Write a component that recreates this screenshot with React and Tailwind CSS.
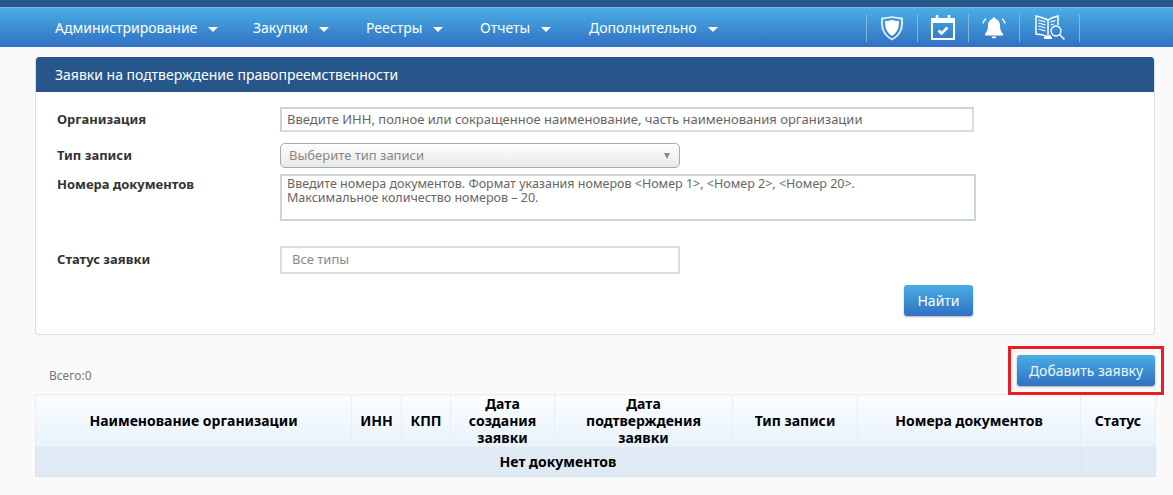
import { ChevronDown } from 'lucide-react';

const MENU = [
  { label: 'Администрирование', cls: 'w-[198px]' },
  { label: 'Закупки', cls: 'w-[113px]' },
  { label: 'Реестры', cls: 'w-[114px]' },
  { label: 'Отчеты', cls: 'w-[109px]' },
  { label: 'Дополнительно', cls: 'w-[140px]' },
];

const COLS = [
  { label: ['Наименование организации'], cls: 'w-[316px]' },
  { label: ['ИНН'], cls: 'w-[50px]' },
  { label: ['КПП'], cls: 'w-[49px]' },
  { label: ['Дата', 'создания', 'заявки'], cls: 'w-[104px]' },
  { label: ['Дата', 'подтверждения', 'заявки'], cls: 'w-[178px]' },
  { label: ['Тип записи'], cls: 'w-[125px]' },
  { label: ['Номера документов'], cls: 'w-[223px]' },
  { label: ['Статус'], cls: 'w-[75px]' },
];

function Caret() {
  return <span className="ml-[11px] mt-[3px] h-0 w-0 border-x-[5px] border-t-[5px] border-x-transparent border-t-white" />;
}

function ShieldIcon() {
  return (
    <svg width="24" height="26" viewBox="0 0 24 26">
      <path d="M12 2 C8 3 5 3 2 3.500 C1.500 11 2 19 12 24.500 C22 19 22.500 11 22 3.500 C19 3 16 3 12 2 Z" fill="none" stroke="white" strokeOpacity="0.85" strokeWidth="1.800" />
      <path d="M12 5 C9 6 7 6 5 6.300 C5 12 6 17 12 21 C18 17 19 12 19 6.300 C17 6 15 6 12 5 Z" fill="white" />
    </svg>
  );
}

function CalendarIcon() {
  return (
    <svg width="24" height="25" viewBox="0 0 24 25">
      <path d="M6 0v4M18 0v4" stroke="white" strokeWidth="2.500" />
      <rect x="1" y="4" width="22" height="20" fill="none" stroke="white" strokeWidth="2" />
      <rect x="1" y="4" width="22" height="4" fill="white" />
      <path d="M7.500 15.500l3 3 6-6" fill="none" stroke="white" strokeWidth="2.600" />
    </svg>
  );
}

function BellIcon() {
  return (
    <svg width="24" height="25" viewBox="0 0 24 25">
      <path d="M12 2.500c-1 0-1.700.7-1.700 1.500C7 5 6 8 6 11c0 4-1.500 6-3 8v1.500h18V19c-1.500-2-3-4-3-8 0-3-1-6-4.300-7 0-.8-.7-1.500-1.700-1.500z" fill="white" />
      <path d="M9.500 21.500c.3 1.300 1.300 2 2.500 2s2.200-.7 2.500-2z" fill="white" />
      <path d="M1 8.500c.3-2 1.300-3.500 3-5M23 8.500c-.3-2-1.300-3.500-3-5" fill="none" stroke="white" strokeWidth="1.200" />
    </svg>
  );
}

function BookIcon() {
  return (
    <svg width="32" height="26" viewBox="0 0 32 26">
      <path d="M14 5 C10 3 6 2 2 1 V19 C6 19 10 20 14 22 Z" fill="none" stroke="white" strokeWidth="1.500" />
      <path d="M14 5 C17 3 20 2 24 1 V10" fill="none" stroke="white" strokeWidth="1.500" />
      <path d="M14 22 C15 21.500 16 21 17 20.700" fill="none" stroke="white" strokeWidth="1.500" />
      <path d="M4.500 5 L11.500 7 M4.500 8 L11.500 10 M4.500 11 L11.500 13 M4.500 14 L11.500 16" stroke="white" strokeWidth="1.300" />
      <path d="M16.500 7 L21.500 5.500 M16.500 10 L20 9" stroke="white" strokeWidth="1.300" />
      <path d="M10 22h8v2h-8z" fill="white" />
      <circle cx="22" cy="16" r="5" fill="none" stroke="white" strokeWidth="1.300" />
      <path d="M25.500 19.500 L30.500 24.500" stroke="white" strokeWidth="1.500" />
    </svg>
  );
}

function Label({ children, className = '' }) {
  return <div className={`w-[244px] pl-[21px] text-[13px] font-bold text-[#333] ${className}`}>{children}</div>;
}

export default function App() {
  return (
    <div className="h-[495px] overflow-hidden bg-[#fafafa] font-['Noto_Sans','DejaVu_Sans',sans-serif]">
      {/* top strip */}
      <div className="h-[7px] bg-[#27578a]" />
      <div className="flex h-[40px] items-center border-t border-[#7cb8e6] bg-gradient-to-b from-[#4aaee3] to-[#3170c3] pl-[55px]">
        {MENU.map((m) => (
          <div key={m.label} className={`flex items-center text-[14px] text-white ${m.cls}`}>
            {m.label}
            <Caret />
          </div>
        ))}
        <div className="ml-[137px] flex h-[28px] items-center border-l border-[#7fb4e0]">
          <div className="flex h-full w-[51px] items-center justify-center border-r border-[#7fb4e0]"><ShieldIcon /></div>
          <div className="flex h-full w-[51px] items-center justify-center border-r border-[#7fb4e0]"><CalendarIcon /></div>
          <div className="flex h-full w-[51px] items-center justify-center border-r border-[#7fb4e0]"><BellIcon /></div>
          <div className="flex h-full w-[60px] items-center justify-center border-r border-[#7fb4e0]"><BookIcon /></div>
        </div>
      </div>

      {/* search panel */}
      <div className="ml-[35px] mt-[10px] w-[1120px] overflow-hidden rounded-[4px] border border-t-0 border-[#d5e2ea] bg-white">
        <div className="flex h-[35px] items-center bg-[#27578a] pl-[19px] text-[14px] text-white">
          Заявки на подтверждение правопреемственности
        </div>
        <div className="h-[242px] pt-[15px]">
          <div className="flex h-[25px] items-center">
            <Label>Организация</Label>
            <div className="flex h-[25px] w-[694px] items-center border-2 border-[#c9d3da] border-b-[#d5dde3] border-r-[#d5dde3] pl-[5px] text-[13px] text-[#666]">
              Введите ИНН, полное или сокращенное наименование, часть наименования организации
            </div>
          </div>
          <div className="mt-[11px] flex h-[25px] items-center">
            <Label>Тип записи</Label>
            <div className="flex h-[25px] w-[400px] items-center justify-between rounded-[5px] border border-[#aaa] bg-gradient-to-b from-white to-[#e8e8e8] pl-[8px] pr-[9px] text-[13px] text-[#888]">
              Выберите тип записи
              <span className="h-0 w-0 border-x-[3.500px] border-t-[6px] border-x-transparent border-t-[#888]" />
            </div>
          </div>
          <div className="mt-[6px] flex">
            <Label className="pt-[1px]">Номера документов</Label>
            <div className="h-[47px] w-[696px] border-2 border-[#c9d6df] px-[5px] text-[12.500px] leading-[14px] text-[#666]">
              <div className="pt-[1px]">Введите номера документов. Формат указания номеров &lt;Номер 1&gt;, &lt;Номер 2&gt;, &lt;Номер 20&gt;.</div>
              <div>Максимальное количество номеров – 20.</div>
            </div>
          </div>
          <div className="mt-[25px] flex h-[28px] items-center">
            <Label>Статус заявки</Label>
            <div className="flex h-[28px] w-[400px] items-center border-2 border-[#d5dde3] pl-[10px] text-[13px] text-[#888]">
              Все типы
            </div>
          </div>
          <div className="mt-[11px] flex w-[937px] justify-end">
            <button type="button" className="h-[31px] w-[69px] rounded-[3px] bg-gradient-to-b from-[#4aaee3] to-[#3170c3] text-[14px] text-white shadow-[0_1px_2px_rgba(0,0,0,0.3)]">
              Найти
            </button>
          </div>
        </div>
      </div>

      {/* table toolbar */}
      <div className="mx-[35px] flex h-[59px] w-[1128px] items-end justify-between">
        <div className="mb-[9px] ml-[14px] text-[12px] text-[#777]">Всего:0</div>
        <div className="mb-[-1px] mr-[-1px] border-[3px] border-[#ed1c24] p-[6px]">
          <button type="button" className="block h-[31px] w-[138px] rounded-[3px] bg-gradient-to-b from-[#4aaee3] to-[#3170c3] text-[14px] text-[#eef6fc] shadow-[0_1px_2px_rgba(0,0,0,0.3)]">
            Добавить заявку
          </button>
        </div>
      </div>

      {/* results */}
      <table className="ml-[35px] w-[1120px] table-fixed border-collapse text-[14px] font-bold leading-[17px] text-black">
        <thead>
          <tr className="h-[52px]">
            {COLS.map((c) => (
              <th key={c.label.join(' ')} className={`border border-[#e9eef2] bg-gradient-to-b from-[#fbfdff] to-[#e8f3fc] p-0 text-center font-bold ${c.cls}`}>
                {c.label.map((line) => <div key={line}>{line}</div>)}
              </th>
            ))}
          </tr>
        </thead>
        <tbody>
          <tr className="h-[30px] bg-[#dfeaf4]">
            <td colSpan={7} className="border border-[#dde5ec] p-0 text-center">Нет документов</td>
            <td className="border border-[#dde5ec] p-0" />
          </tr>
        </tbody>
      </table>
    </div>
  );
}
